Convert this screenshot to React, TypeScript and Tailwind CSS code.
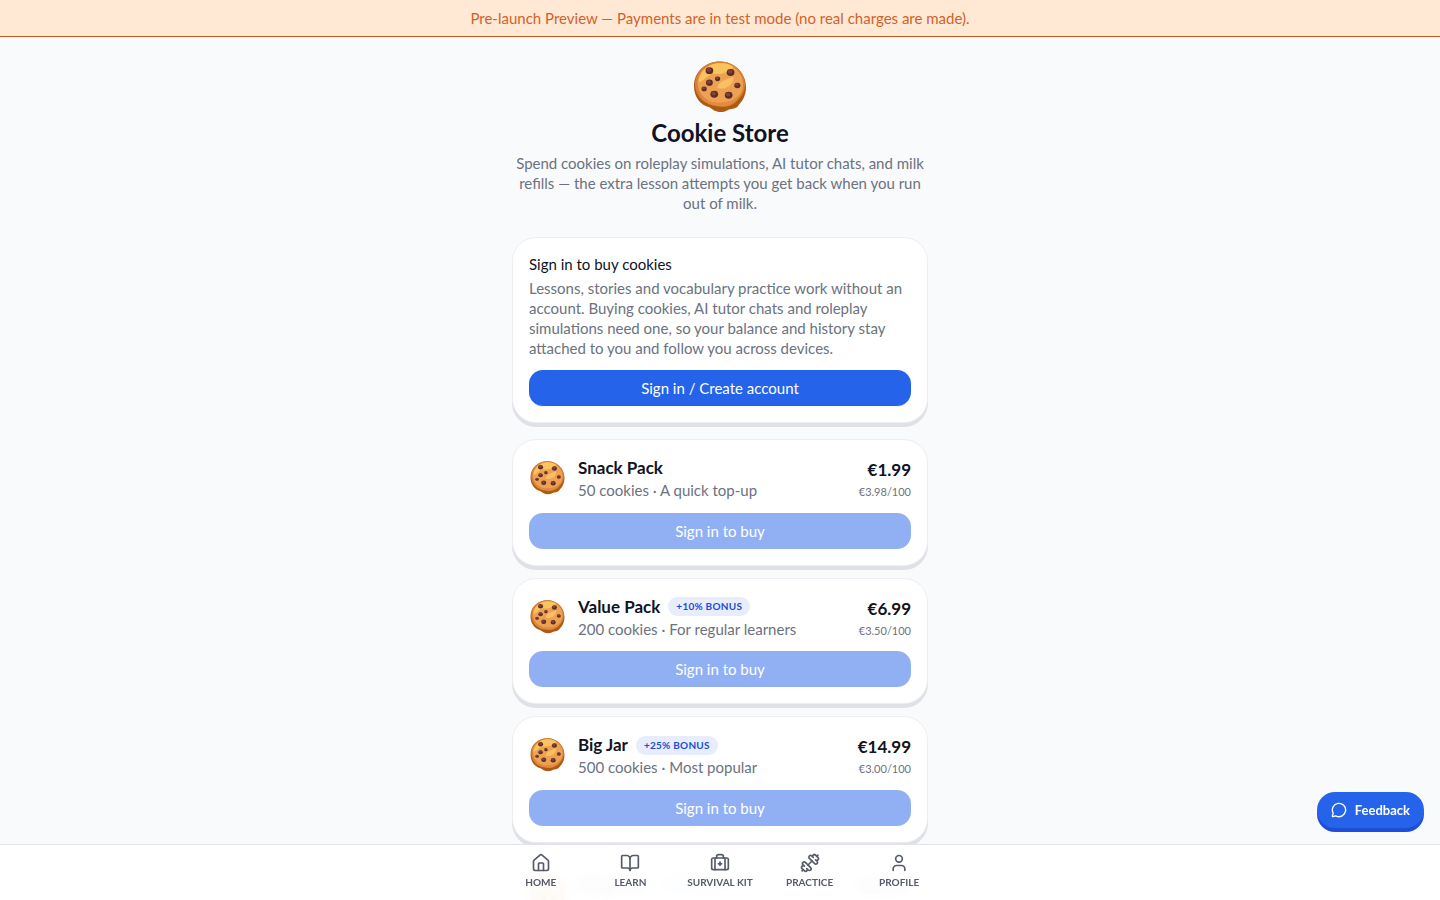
import { BookOpen, BriefcaseMedical, Dumbbell, House, MessageCircle, User } from 'lucide-react';

const packs = [
    { id: 'snack', name: 'Snack Pack', bonus: '', detail: '50 cookies · A quick top-up', price: '€1.99', rate: '€3.98/100' },
    { id: 'value', name: 'Value Pack', bonus: '+10% BONUS', detail: '200 cookies · For regular learners', price: '€6.99', rate: '€3.50/100' },
    { id: 'big', name: 'Big Jar', bonus: '+25% BONUS', detail: '500 cookies · Most popular', price: '€14.99', rate: '€3.00/100' },
    { id: 'mega', name: 'Mega Jar', bonus: '+40% BONUS', detail: '1200 cookies · Best value', price: '€29.99', rate: '€2.50/100' },
];

const tabs = [
    { label: 'HOME', icon: House },
    { label: 'LEARN', icon: BookOpen },
    { label: 'SURVIVAL KIT', icon: BriefcaseMedical },
    { label: 'PRACTICE', icon: Dumbbell },
    { label: 'PROFILE', icon: User },
];

// [cx, cy, radius]
const chips = [
    [19, 13, 4], [41, 15, 4], [27.500, 21.500, 2.700], [19, 25.500, 3.600], [48, 28.500, 3.200], [13.500, 32, 2.700], [24, 37.500, 4], [39, 38.500, 4],
];

function Cookie({ className }: { className: string }) {
    return (
        <svg viewBox="3 3 54 54" className={className} aria-hidden="true">
            <path d="M30 3.500C44 3.500 57 15 57 30c0 8-3 14-7 18-2 4-6 5-9 5-3 0-5 3-10 3-6 0-9-3-12-5C10 49 3 41 3 29 3 14 15 3.500 30 3.500Z" fill="#ad5b14" />
            <path d="M30 3.500C44 3.500 56 14 56 27c0 9-5 15-10 19-6 5-13 5-19 4C15 49 5 41 4 28 4 14 15 3.500 30 3.500Z" fill="#d98235" />
            <path d="M31 5C43 5 54 15 54 27c0 9-5 15-12 18-9 4-20 3-27-3C9 38 6 30 7 23 9 12 19 5 31 5Z" fill="#eda153" />
            <path d="M19 8c8-5 20-3 25 1-5 6-14 9-21 7-6 1-9 8-15 9 0-7 4-13 11-17Z" fill="#f9c45e" />
            <path d="M27 31c2-8 9-8 17-12 1 7-7 15-17 12Z" fill="#f9bf62" />
            <path d="M8 35c4 9 14 12 24 11 8 0 15-4 19-9-4 10-15 15-26 12C17 48 10 43 8 35Z" fill="#e48b3f" />
            {chips.map(([cx, cy, r]) => (
                <g key={`${cx}-${cy}`}>
                    <ellipse cx={cx} cy={cy} rx={r} ry={r * 0.9} fill="#5c2b25" />
                    <ellipse cx={cx - 0.6} cy={cy - 0.8} rx={r * 0.6} ry={r * 0.5} fill="#7c443c" />
                </g>
            ))}
        </svg>
    );
}

function PackCard({ pack }: { pack: (typeof packs)[number] }) {
    return (
        <li className="rounded-3xl border border-[#eceef2] bg-white p-4 shadow-[0_4px_0_#dfe1e6]">
            <div className="flex items-center gap-3">
                <Cookie className="h-[34px] w-[37px] shrink-0" />
                <div className="min-w-0 flex-1">
                    <div className="flex items-center gap-2">
                        <h2 className="text-[17px] leading-6 font-bold">{pack.name}</h2>
                        {pack.bonus && (
                            <span className="rounded-full bg-[#e7edfc] px-2 py-0.5 text-[10px] leading-[15px] font-bold tracking-wide text-[#1d4ed8]">
                                {pack.bonus}
                            </span>
                        )}
                    </div>
                    <p className="text-[15px] leading-5 text-[#6b7280]">{pack.detail}</p>
                </div>
                <div className="text-right">
                    <p className="text-[17px] leading-7 font-bold">{pack.price}</p>
                    <p className="text-[11px] leading-normal text-[#6b7280]">{pack.rate}</p>
                </div>
            </div>
            <button type="button" disabled className="mt-3 h-9 w-full rounded-[14px] bg-[#2563eb] text-[15px] leading-5 text-white opacity-50">
                Sign in to buy
            </button>
        </li>
    );
}

export default function App() {
    return (
        <div className="min-h-screen bg-[#f9fafc] pb-20 font-['Lato',sans-serif] text-[#111322]">
            <div className="border-b border-[#c2571f] bg-[#ffe9d5] px-4 py-2 text-center text-[15px] leading-5 text-[#d0622b]">
                Pre-launch Preview — Payments are in test mode (no real charges are made).
            </div>

            <main className="mx-auto max-w-md px-4 pt-6">
                <header className="mb-6 flex flex-col items-center text-center">
                    <Cookie className="mb-1 h-[52px] w-[54px]" />
                    <h1 className="text-2xl leading-8 font-bold">Cookie Store</h1>
                    <p className="mt-1 text-[15px] leading-5 text-[#6b7280]">
                        Spend cookies on roleplay simulations, AI tutor chats, and milk refills — the extra lesson attempts you get back when you run out of milk.
                    </p>
                </header>

                <section className="rounded-3xl border border-[#eceef2] bg-white p-4 shadow-[0_4px_0_#dfe1e6]">
                    <h2 className="text-[15px] leading-5">Sign in to buy cookies</h2>
                    <p className="mt-1 text-[15px] leading-5 text-[#6b7280]">
                        Lessons, stories and vocabulary practice work without an account. Buying cookies, AI tutor chats and roleplay simulations need one, so your balance and history stay attached to you and follow you across devices.
                    </p>
                    <button type="button" className="mt-3 h-9 w-full rounded-[14px] bg-[#2563eb] text-[15px] leading-5 text-white shadow-xs">
                        Sign in / Create account
                    </button>
                </section>

                <ul className="mt-4 space-y-3">
                    {packs.map((pack) => (
                        <PackCard key={pack.id} pack={pack} />
                    ))}
                </ul>
            </main>

            <button type="button" className="fixed right-4 bottom-[72px] flex h-9 items-center gap-2 rounded-[18px] bg-[#2563eb] px-3.5 text-[13px] leading-4 font-bold text-white shadow-[0_4px_0_#1d4ed8]">
                <MessageCircle className="h-4 w-4" />
                Feedback
            </button>

            <nav className="fixed inset-x-0 bottom-0 border-t border-[#e2e4e9] bg-white/95 backdrop-blur-sm">
                <div className="mx-auto grid h-[55px] max-w-md grid-cols-5">
                    {tabs.map(({ label, icon: Icon }) => (
                        <a key={label} href="#" className="flex flex-col items-center gap-0.5 pt-2 text-[10px] leading-[15px] font-bold whitespace-nowrap text-[#565b69]">
                            <Icon className="h-5 w-5" />
                            {label}
                        </a>
                    ))}
                </div>
            </nav>
        </div>
    );
}
